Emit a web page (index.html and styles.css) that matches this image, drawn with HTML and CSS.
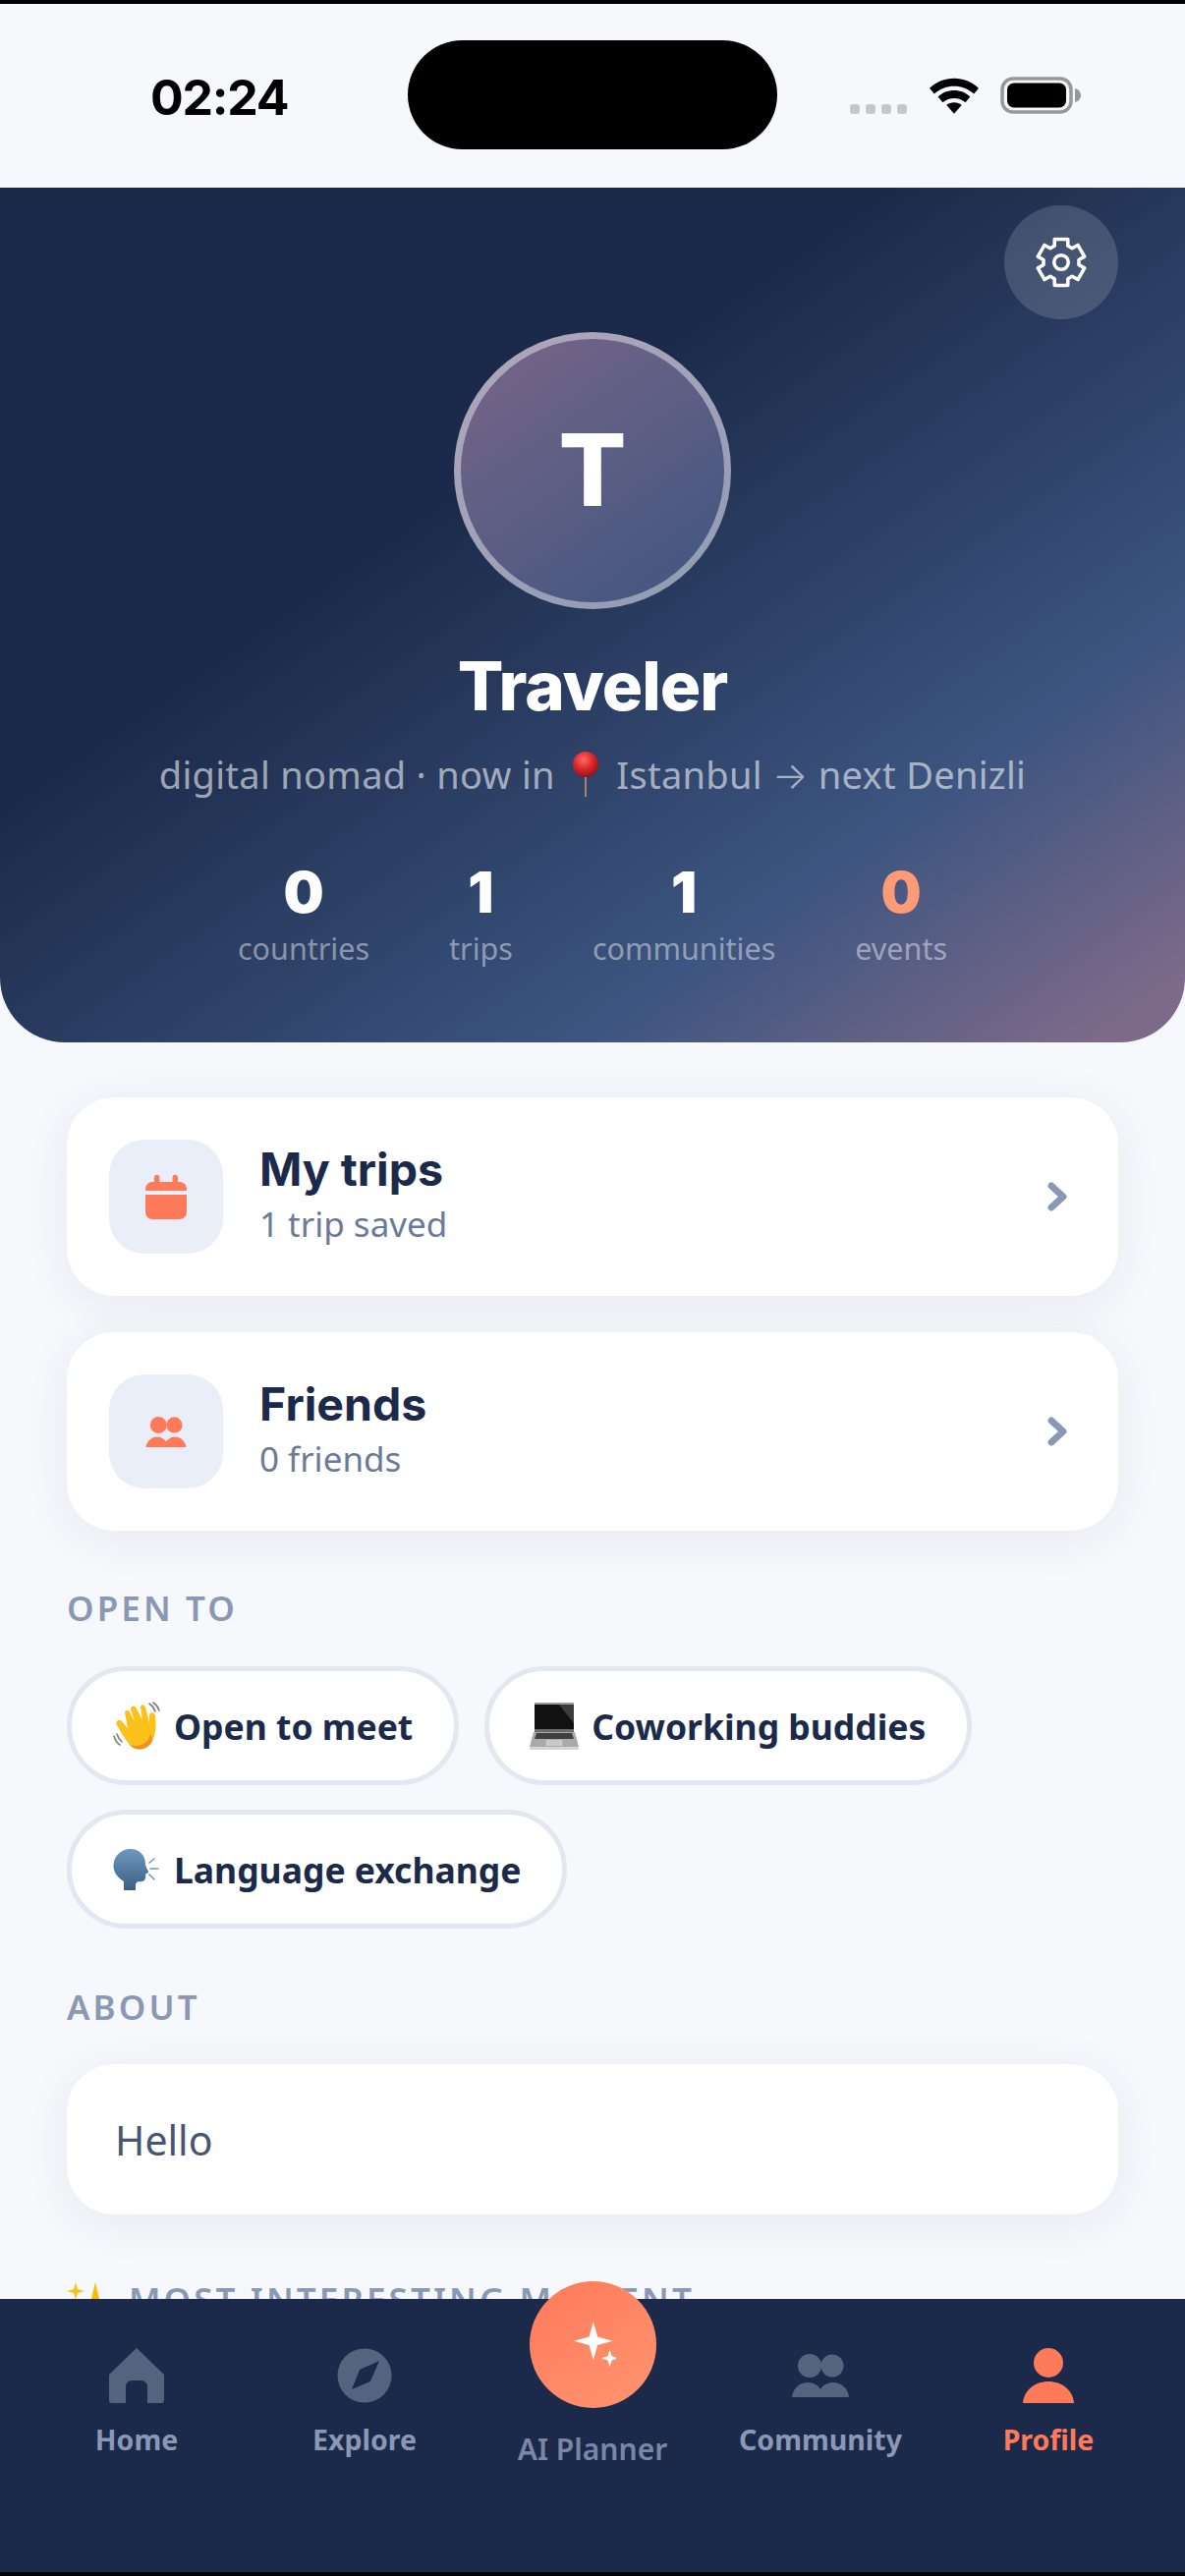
FILE: index.html
```
<!DOCTYPE html>
<html lang="en">
<head>
<meta charset="utf-8">
<title>Profile</title>
<link rel="stylesheet" href="styles.css">
</head>
<body>
<div class="phone">
  <div class="screen">
    <header class="status">
      <span class="time">02:24</span>
      <div class="island"></div>
      <div class="status-icons">
        <div class="signal"><i></i><i></i><i></i><i></i></div>
        <svg class="wifi" width="50" height="37" viewBox="0 0 52 38"><path d="M0 11 C14 -3 38 -3 52 11 L47 17 C35 6 17 6 5 17Z"/><path d="M9 20 C18 11 34 11 43 20 L38 26 C31 20 21 20 14 26Z"/><path d="M18 29 C22 25 30 25 34 29 L26 38Z"/></svg>
        <svg class="battery" width="82" height="38" viewBox="0 0 82 38"><rect x="2" y="2" width="70" height="34" rx="11" fill="none" stroke="#98989c" stroke-width="3.5"/><rect x="7" y="6.500" width="60" height="25" rx="7"/><path d="M76 12 C80 13 82 16 82 19 C82 22 80 25 76 26Z" fill="#98989c"/></svg>
      </div>
    </header>

    <section class="hero">
      <button class="settings" aria-label="Settings">
        <svg width="54" height="54" viewBox="-1 -1 52 52" fill="none" stroke="#fff" stroke-width="3.4" stroke-linejoin="round"><path d="M18.5 2.4 L31.5 2.4 L31.56 8.8 L35.75 11.22 L41.32 8.07 L47.82 19.33 L42.31 22.58 L42.31 27.42 L47.82 30.67 L41.32 41.93 L35.75 38.78 L31.56 41.2 L31.5 47.6 L18.5 47.6 L18.44 41.2 L14.25 38.78 L8.68 41.93 L2.18 30.67 L7.69 27.42 L7.69 22.58 L2.18 19.33 L8.68 8.07 L14.25 11.22 L18.44 8.8 Z"/><circle cx="25" cy="25" r="7"/></svg>
      </button>
      <div class="avatar"><span>T</span></div>
      <h1 class="name">Traveler</h1>
      <p class="bio">digital nomad · now in <svg class="pin" width="26" height="46" viewBox="0 0 26 46"><defs><radialGradient id="pinball" cx="0.42" cy="0.32" r="0.7"><stop offset="0" stop-color="#ff6a5e"/><stop offset="0.55" stop-color="#d8262a"/><stop offset="1" stop-color="#8f1416"/></radialGradient></defs><rect x="12" y="20" width="2" height="26" fill="#a8845c"/><ellipse cx="13" cy="13" rx="13" ry="13" fill="url(#pinball)"/></svg> Istanbul <span class="arrow">→</span> next Denizli</p>
      <div class="stats">
        <div class="stat"><b>0</b><span>countries</span></div>
        <div class="stat"><b>1</b><span>trips</span></div>
        <div class="stat"><b>1</b><span>communities</span></div>
        <div class="stat stat-accent"><b>0</b><span>events</span></div>
      </div>
    </section>

    <main class="content">
      <a class="card link-card">
        <div class="icon-box">
          <svg width="42" height="46" viewBox="0 0 42 46"><path fill="#ff7a59" d="M9 3.5a2.7 2.7 0 0 1 5.4 0V8h13.2V3.5a2.7 2.7 0 0 1 5.4 0V8h2A7 7 0 0 1 42 15v2H0v-2a7 7 0 0 1 7-7h2zM0 21h42v18a7 7 0 0 1-7 7H7a7 7 0 0 1-7-7z"/></svg>
        </div>
        <div class="card-text"><strong>My trips</strong><span>1 trip saved</span></div>
        <svg class="chevron" width="20" height="30" viewBox="0 0 20 30" fill="none" stroke="#8a98b5" stroke-width="7" stroke-linecap="round" stroke-linejoin="round"><path d="M4 4 L16 15 L4 26"/></svg>
      </a>
      <a class="card link-card">
        <div class="icon-box">
          <svg width="42" height="31" viewBox="0 0 58 44" fill="#ff7a59"><use href="#people"/></svg>
        </div>
        <div class="card-text"><strong>Friends</strong><span>0 friends</span></div>
        <svg class="chevron" width="20" height="30" viewBox="0 0 20 30" fill="none" stroke="#8a98b5" stroke-width="7" stroke-linecap="round" stroke-linejoin="round"><path d="M4 4 L16 15 L4 26"/></svg>
      </a>

      <h2 class="section-label label-open">OPEN TO</h2>
      <div class="chips">
        <span class="chip">
          <svg class="emoji" width="50" height="50" viewBox="0 0 50 50"><g fill="none" stroke="#7d7d7d" stroke-width="1.6" stroke-linecap="round"><path d="M38 2 C41 4 43 7 44 10"/><path d="M42 1 C45 3 47 6 48 9"/><path d="M2 35 C3 39 5 42 8 44"/><path d="M5 33 C6 36 8 39 10 41"/></g><path fill="#fcc21b" d="M13 11 C14 8 17 8 18 11 L23 20 L19 8 C19 4 23 3 25 7 L31 19 L29 6 C29 3 33 2 34 6 L38 21 L38 14 C39 10 43 10 44 14 C45 24 45 32 41 40 C36 50 24 51 18 44 C13 38 9 31 5 24 C3 20 7 17 10 20 L16 27 Z"/><path fill="#f19020" d="M41 40 C36 50 24 51 18 44 C26 47 36 44 39 33 C40 35 41 37 41 40Z"/></svg>
          Open to meet
        </span>
        <span class="chip">
          <svg class="emoji" width="50" height="50" viewBox="0 0 50 50"><rect x="5" y="1" width="40" height="27" fill="#111"/><path d="M5 1h40v2H5z" fill="#9a9a9a"/><path d="M30 3 L45 3 L45 22Z" fill="#3b3b3b"/><path d="M5 28h40v3H5z" fill="#6c6c6c"/><path d="M4 31 H46 L50 46 H0Z" fill="#a9a9a9"/><path d="M7 32 H43 L45 38 H5Z" fill="#3f3f3f"/><path d="M17 39 H33 L34 45 H16Z" fill="#c9c9c9"/><path d="M0 46H50V49H0Z" fill="#d4d4d4"/></svg>
          Coworking buddies
        </span>
        <span class="chip">
          <svg class="emoji" width="50" height="50" viewBox="0 0 50 50"><defs><linearGradient id="headfill" x1="0" y1="0" x2="0" y2="1"><stop offset="0" stop-color="#6f97bd"/><stop offset="1" stop-color="#3b5f86"/></linearGradient></defs><path fill="url(#headfill)" d="M17 4 C28 3 34 11 34 19 C34 22 37 26 37 27 C37 29 34 29 34 30 C35 34 33 38 28 37 C26 37 24 38 24 41 L24 46 L12 46 L12 37 C4 32 0 25 2 17 C4 9 10 5 17 4Z"/><g stroke="#6f97bd" stroke-width="1.6" stroke-linecap="round"><path d="M38 18 L43 14"/><path d="M39 24 L47 24"/><path d="M38 30 L43 35"/></g></svg>
          Language exchange
        </span>
      </div>

      <h2 class="section-label label-about">ABOUT</h2>
      <div class="card about-card">Hello</div>

      <h2 class="section-label label-moment">
        <svg class="sparkle-emoji" width="46" height="46" viewBox="0 0 46 46"><path fill="#fcc21b" d="M9 0 L11 7 L18 9 L11 11 L9 18 L7 11 L0 9 L7 7Z"/><path fill="#fdb900" d="M29 0 L33 17 L44 22 L33 27 L29 44 L25 27 L14 22 L25 17Z"/></svg>
        MOST INTERESTING MOMENT
      </h2>
    </main>

    <nav class="tabbar">
      <a class="tab">
        <svg class="tab-icon" width="56" height="56" viewBox="0 0 56 56"><path fill="#55647e" fill-rule="evenodd" d="M28 0 L56 27 V53 a3 3 0 0 1-3 3 H39 V39 a6 6 0 0 0-6-6 H23 a6 6 0 0 0-6 6 V56 H3 a3 3 0 0 1-3-3 V27 Z"/></svg>
        <span>Home</span>
      </a>
      <a class="tab">
        <svg class="tab-icon" width="56" height="56" viewBox="0 0 56 56"><circle cx="28" cy="28" r="27.5" fill="#55647e"/><path fill="#1b2a4a" d="M43 13 L34 34 L15 42 L23 22Z"/></svg>
        <span>Explore</span>
      </a>
      <a class="tab tab-ai">
        <div class="ai-button">
          <svg width="48" height="48" viewBox="-6 0 56 56" fill="#fff"><path d="M23 0 L28 18 L46 23 L28 28 L23 46 L18 28 L0 23 L18 18Z"/><path transform="translate(1.5 2.5)" d="M41 31 L43.5 38.5 L51 41 L43.5 43.5 L41 51 L38.500 43.500 L31 41 L38.500 38.500Z"/></svg>
        </div>
        <span>AI Planner</span>
      </a>
      <a class="tab">
        <svg class="tab-icon" width="58" height="56" viewBox="0 -6 58 56" fill="#55647e"><g id="people"><circle cx="18" cy="12" r="12"/><circle cx="41" cy="12" r="11.500"/><path d="M0 44 C1 34 9 29 16 29 C21 29 26 31 29 36 C32 31 37 29 42 29 C49 29 57 34 58 44Z"/></g></svg>
        <span>Community</span>
      </a>
      <a class="tab tab-active">
        <svg class="tab-icon" width="56" height="56" viewBox="0 0 56 56" fill="#ff7a59"><ellipse cx="28" cy="15" rx="15" ry="15"/><path d="M2 56 C3 43 14 34 28 34 C42 34 53 43 54 56Z"/></svg>
        <span>Profile</span>
      </a>
    </nav>
  </div>
</div>
</body>
</html>
```
FILE: styles.css
```
* { box-sizing: border-box; }
html, body { margin: 0; padding: 0; }
body { width: 1206px; height: 2622px; background: #000; overflow: hidden; font-family: "Noto Sans", sans-serif; }
.phone { height: 2622px; padding: 4px 0; }
.screen { position: relative; height: 2614px; background: #f7f8fc; overflow: hidden; }

.status { height: 187px; display: flex; align-items: flex-start; position: relative; }
.time { margin: 66px 0 0 153px; font: 700 50px/58px "Inter", sans-serif; color: #000; width: 262px; letter-spacing: -1.2px; }
.island { width: 376px; height: 111px; margin-top: 37px; background: #000; border-radius: 56px; flex: none; }
.status-icons { display: flex; align-items: flex-end; margin: 74px 0 0 74px; }
.signal { display: flex; gap: 6px; margin: 0 23px 0 0; }
.signal i { width: 10px; height: 10px; border-radius: 3px; background: #c6c6cb; }
.wifi { margin-right: 22px; }
.battery { display: block; }

.hero { position: relative; padding: 147px 0 76px; display: flex; flex-direction: column; align-items: center; border-radius: 0 0 66px 66px; background: linear-gradient(145deg, #1b2a4a 0%, #1b2a4a 37%, #3d5580 75%, #7d6a8a 96%); }
.settings { position: absolute; top: 18px; right: 68px; width: 116px; height: 116px; border: 0; padding: 0; border-radius: 50%; background: rgba(255,255,255,.15); display: flex; align-items: center; justify-content: center; }
.avatar { width: 282px; height: 282px; border-radius: 50%; border: 7px solid rgba(255,255,255,.42); background: linear-gradient(145deg, #7a6688, #3d5580); background-origin: border-box; display: flex; align-items: center; justify-content: center; }
.avatar span { font: 800 102px/1 "Inter", sans-serif; color: #fff; margin-top: -2px; }
.name { margin: 38px 0 0; font: 800 69px/80px "Inter", sans-serif; color: #fff; letter-spacing: -1px; }
.bio { margin: 25px 0 0; font-size: 38px; line-height: 50px; color: rgba(255,255,255,.58); white-space: nowrap; letter-spacing: .3px; }
.pin { vertical-align: -8px; margin: 0 8px; }
.arrow { font-family: "Inter", sans-serif; font-weight: 300; }
.stats { display: flex; gap: 81px; margin-top: 62px; }
.stat { display: flex; flex-direction: column; align-items: center; }
.stat b { font: 900 58px/64px "Inter", sans-serif; color: #fff; }
.stat span { margin-top: 5px; font-size: 30.500px; line-height: 40px; color: rgba(255,255,255,.45); }
.stat-accent b { color: #ff9a76; }

.content { padding: 56px 68px 0; }
.card { display: block; background: #fff; border-radius: 48px; box-shadow: 0 8px 48px rgba(27,42,74,.07); }
.link-card { display: flex; align-items: center; height: 202px; padding: 0 52px 0 43px; margin-bottom: 37px; }
.icon-box { width: 116px; height: 116px; border-radius: 36px; background: #eaeef8; display: flex; align-items: center; justify-content: center; margin-right: 37px; flex: none; }
.card-text { flex: 1; display: flex; flex-direction: column; margin-top: -5px; }
.card-text strong { font: 700 46.500px/54px "Inter", sans-serif; color: #1b2a4a; }
.card-text span { font-size: 35px; line-height: 44px; color: #6b7a99; margin-top: 7px; }

.section-label { margin: 0; font-size: 35px; line-height: 44px; font-weight: 600; color: #8a98b5; letter-spacing: 3.100px; }
.label-open { margin-top: 57px; }
.chips { display: flex; flex-wrap: wrap; gap: 25px 26px; margin-top: 37px; }
.chip { height: 121px; padding: 0 42px 0 41px; border: 5px solid #e2e7f1; border-radius: 61px; background: #fff; display: flex; align-items: center; gap: 13px; font-size: 35.500px; font-weight: 700; color: #1b2a4a; }
.emoji { flex: none; }
.label-about { margin-top: 58px; }
.about-card { margin-top: 36px; height: 153px; padding: 0 49px; display: flex; align-items: center; font-size: 41px; color: #465672; }
.label-moment { margin-top: 65px; white-space: nowrap; display: flex; align-items: flex-start; gap: 17px; }
.sparkle-emoji { flex: none; margin-top: 4px; }

.tabbar { position: absolute; left: 0; right: 0; bottom: 0; height: 278px; background: #1b2a4a; padding: 0 23px; display: grid; grid-template-columns: repeat(5, 232px); align-items: start; }
.tab { display: flex; flex-direction: column; align-items: center; padding-top: 50px; color: #8a98b5; font-size: 28.500px; font-weight: 700; line-height: 40px; }
.tab-icon { display: block; }
.tab span { margin-top: 17px; }
.tab-active { color: #ff7a59; }
.tab-ai { padding-top: 0; margin-top: -18px; }
.ai-button { width: 129px; height: 129px; border-radius: 50%; background: linear-gradient(145deg, #ff7a59, #ff9472); display: flex; align-items: center; justify-content: center; }
.tab-ai span { margin-top: 22px; font-size: 30px; font-weight: 600; opacity: .85; }
```
